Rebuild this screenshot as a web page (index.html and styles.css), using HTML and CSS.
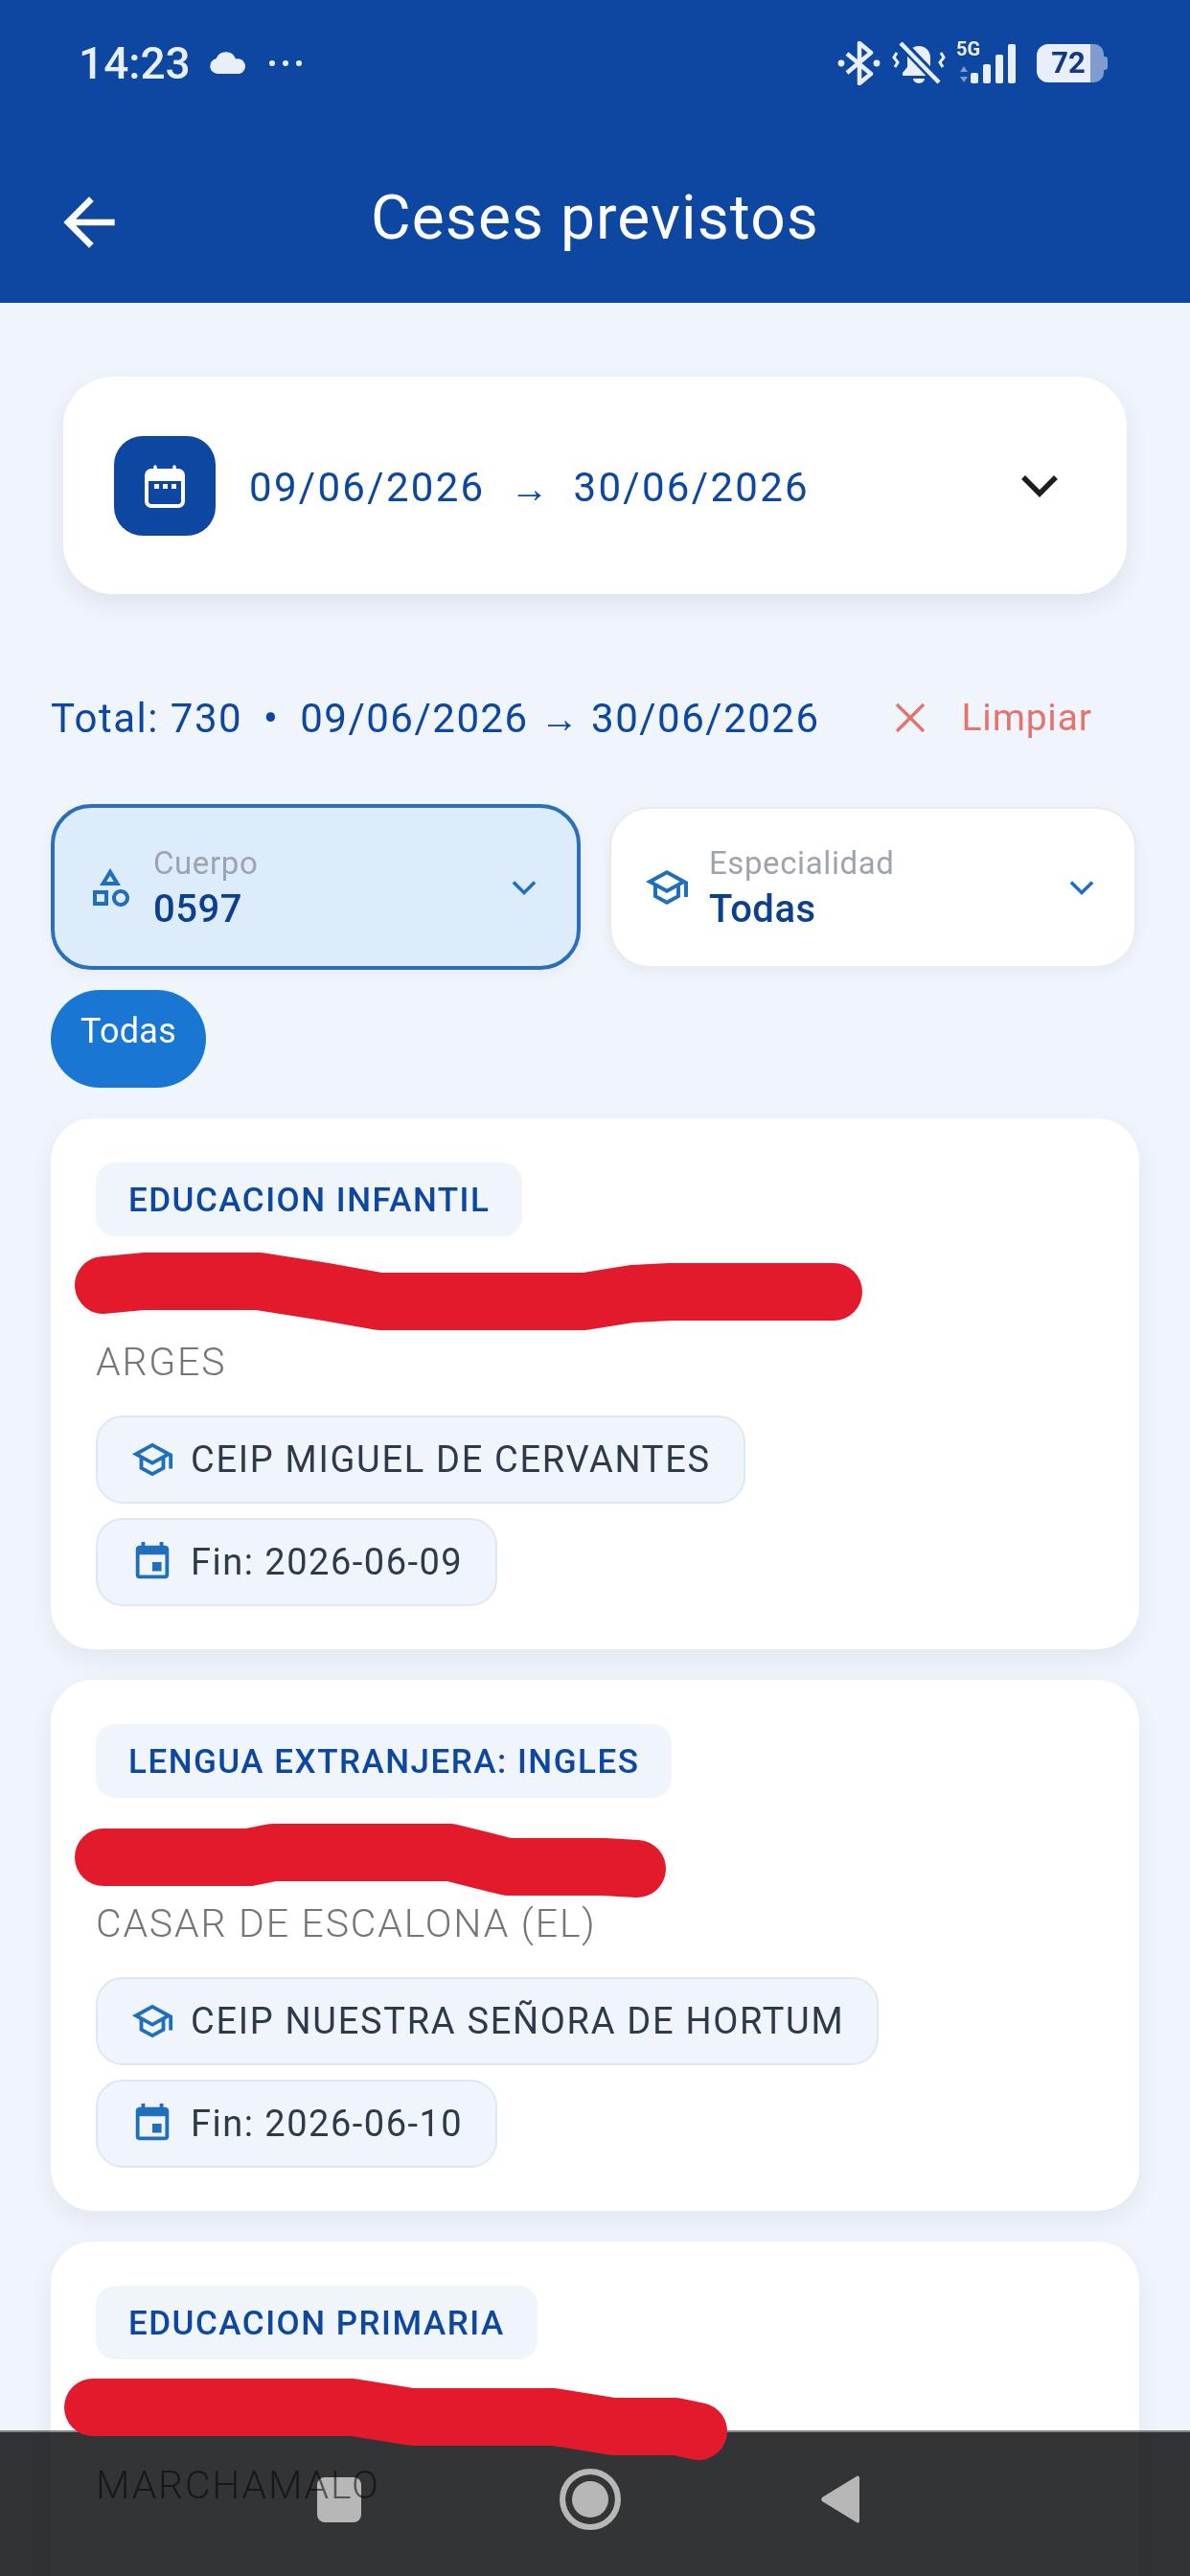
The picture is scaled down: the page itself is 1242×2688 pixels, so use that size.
FILE: index.html
```html
<!DOCTYPE html>
<html lang="es">
<head>
    <meta charset="UTF-8">
    <meta name="viewport" content="width=device-width, initial-scale=1.0">
    <title>Ceses previstos</title>
    <link rel="stylesheet" href="styles.css">
</head>
<body>

<svg class="defs" width="0" height="0">
    <symbol id="school" viewBox="0 0 24 24"><path d="M12 3L1 9l4 2.18v6L12 21l7-3.82v-6l2-1.09V17h2V9L12 3zm6.82 6L12 12.72 5.18 9 12 5.27 18.82 9zM17 15.99l-5 2.73-5-2.73v-3.72L12 15l5-2.73v3.72z"/></symbol>
    <symbol id="event" viewBox="0 0 24 24"><path d="M17 12h-5v5h5v-5zM16 1v2H8V1H6v2H5c-1.11 0-1.99.9-1.99 2L3 19c0 1.1.89 2 2 2h14c1.1 0 2-.9 2-2V5c0-1.1-.9-2-2-2h-1V1h-2zm3 18H5V8h14v11z"/></symbol>
    <symbol id="expand" viewBox="0 0 24 24"><path d="M5 8.5l7 7 7-7" fill="none" stroke="currentColor" stroke-width="2.2"/></symbol>
</svg>

<header class="appbar">
    <div class="statusbar">
        <div class="status-left">
            <span class="clock">14:23</span>
            <svg class="cloud" viewBox="0 0 40 24"><path d="M9 23a8 8 0 0 1-1.5-15.8A11 11 0 0 1 28 7.5 8 8 0 0 1 32 23z"/></svg>
            <svg class="dots" viewBox="0 0 36 8"><circle cx="4" cy="4" r="3"/><circle cx="18" cy="4" r="3"/><circle cx="32" cy="4" r="3"/></svg>
        </div>
        <div class="status-right">
            <svg class="bt" viewBox="0 0 46 46">
                <path d="M10 13l25 21-12 10V2l12 10-25 21" fill="none" stroke="#e8eefa" stroke-width="4.5" stroke-linejoin="round"/>
                <circle cx="4" cy="23" r="3.4" fill="#e8eefa"/><circle cx="41" cy="23" r="3.4" fill="#e8eefa"/>
            </svg>
            <svg class="bell" viewBox="0 0 56 46">
                <path d="M28 5c-7 0-12 5-12 12v10l-5 6v3h34v-3l-5-6V17c0-7-5-12-12-12z" fill="#e8eefa"/>
                <path d="M22 39h12a6 5 0 0 1-12 0z" fill="#e8eefa"/>
                <path d="M9 1l40 42" stroke="#0d47a1" stroke-width="10"/>
                <path d="M9 2l40 41" stroke="#e8eefa" stroke-width="4.5"/>
                <path d="M5 12l-3 5 4 5-3 5M51 12l3 5-4 5 3 5" fill="none" stroke="#e8eefa" stroke-width="3"/>
            </svg>
            <div class="signal">
                <span class="net">5G</span>
                <svg class="updown" viewBox="0 0 10 17"><path d="M5 0l4 6H1zM5 17l4-6H1z"/></svg>
                <div class="bars"><i class="b1"></i><i class="b2"></i><i class="b3"></i><i class="b4"></i></div>
            </div>
            <div class="battery"><span class="level">72</span><span class="rest"></span><span class="nub"></span></div>
        </div>
    </div>
    <div class="toolbar">
        <svg class="back" viewBox="0 0 24 24"><path d="M20 11H7.83l5.59-5.59L12 4l-8 8 8 8 1.41-1.41L7.83 13H20v-2z"/></svg>
        <h1>Ceses previstos</h1>
    </div>
</header>

<main class="content">
    <section class="range-card">
        <div class="range-icon">
            <svg viewBox="0 0 48 48">
                <path d="M14 4v7M34 4v7" stroke="#fff" stroke-width="3.5" stroke-linecap="round"/>
                <rect x="5" y="8" width="38" height="37" rx="5" fill="none" stroke="#fff" stroke-width="4"/>
                <path d="M5 13a5 5 0 0 1 5-5h28a5 5 0 0 1 5 5v6H5z" fill="#fff"/>
                <rect x="13" y="22" width="5" height="5" fill="#fff"/><rect x="22" y="22" width="5" height="5" fill="#fff"/><rect x="31" y="22" width="5" height="5" fill="#fff"/>
            </svg>
        </div>
        <span class="range-date">09/06/2026</span>
        <span class="range-arrow">→</span>
        <span class="range-date">30/06/2026</span>
        <svg class="range-chevron" viewBox="0 0 42 26"><path d="M4 4l17 17L38 4" fill="none" stroke="#1c1c1c" stroke-width="5.5"/></svg>
    </section>

    <div class="summary">
        <span class="summary-text">Total: 730 <b>•</b> 09/06/2026 <em>→</em> 30/06/2026</span>
        <button class="clear">
            <svg viewBox="0 0 34 34"><path d="M3 3l28 28M31 3L3 31" stroke="#e5736d" stroke-width="3.4"/></svg>
            Limpiar
        </button>
    </div>

    <div class="selects">
        <div class="select active">
            <svg class="select-icon" viewBox="0 0 24 24"><path d="M12 2l-5.5 9h11L12 2zm0 3.84L13.93 9h-3.87L12 5.84zM17.5 13c-2.49 0-4.5 2.01-4.5 4.5s2.01 4.5 4.5 4.5 4.5-2.01 4.5-4.5-2.01-4.5-4.5-4.5zm0 7c-1.38 0-2.5-1.12-2.5-2.5s1.12-2.5 2.5-2.5 2.5 1.12 2.5 2.5-1.12 2.5-2.5 2.5zM3 21.5h8v-8H3v8zm2-6h4v4H5v-4z"/></svg>
            <div class="select-text"><span class="select-label">Cuerpo</span><span class="select-value">0597</span></div>
            <svg class="select-chevron"><use href="#expand"/></svg>
        </div>
        <div class="select">
            <svg class="select-icon"><use href="#school"/></svg>
            <div class="select-text"><span class="select-label">Especialidad</span><span class="select-value">Todas</span></div>
            <svg class="select-chevron"><use href="#expand"/></svg>
        </div>
    </div>

    <div class="pill">Todas</div>

    <article class="card">
        <span class="tag">EDUCACION INFANTIL</span>
        <div class="name-row">
            <svg class="redact" viewBox="0 0 900 200"><path d="M68 71L110 67H230L300 78 356 88H570L620 80 660 78H830"/></svg>
        </div>
        <p class="town">ARGES</p>
        <div class="chip"><svg><use href="#school"/></svg>CEIP MIGUEL DE CERVANTES</div>
        <div class="chip end"><svg><use href="#event"/></svg>Fin: 2026-06-09</div>
    </article>

    <article class="card">
        <span class="tag">LENGUA EXTRANJERA: INGLES</span>
        <div class="name-row">
            <svg class="redact" viewBox="0 0 900 200"><path d="M68 82H220L245 77H430L490 92H590L625 94"/></svg>
        </div>
        <p class="town">CASAR DE ESCALONA (EL)</p>
        <div class="chip"><svg><use href="#school"/></svg>CEIP NUESTRA SEÑORA DE HORTUM</div>
        <div class="chip end"><svg><use href="#event"/></svg>Fin: 2026-06-10</div>
    </article>

    <article class="card last">
        <span class="tag">EDUCACION PRIMARIA</span>
        <div class="name-row">
            <svg class="redact" viewBox="0 0 900 200"><path d="M57 70H328L390 80H538L600 90H665L689 95"/></svg>
        </div>
        <p class="town">MARCHAMALO</p>
    </article>
</main>

<nav class="navbar">
    <span class="nav-square"></span>
    <span class="nav-circle"></span>
    <svg class="nav-back" viewBox="0 0 44 52"><path d="M41 3v46a2 2 0 0 1-3 1L2 28a3 3 0 0 1 0-4L38 2a2 2 0 0 1 3 1z"/></svg>
</nav>

</body>
</html>
```

FILE: styles.css
```css
* {
    box-sizing: border-box;
}
html, body {
    margin: 0;
    padding: 0;
}
body {
    position: relative;
    width: 1242px;
    height: 2688px;
    overflow: hidden;
    background-color: #f0f4fb;
    font-family: Roboto, "Liberation Sans", sans-serif;
}
.defs {
    position: absolute;
}

/* barra superior */
.appbar {
    height: 316px;
    background-color: #0d47a1;
    color: #fff;
}
.statusbar {
    height: 132px;
    padding: 0 86px 0 82px;
    display: flex;
    justify-content: space-between;
    align-items: center;
    color: #e8eefa;
}
.status-left, .status-right {
    display: flex;
    align-items: center;
}
.clock {
    font-size: 46px;
    font-weight: 500;
}
.cloud {
    width: 40px;
    height: 24px;
    margin-left: 19px;
    fill: #e8eefa;
}
.dots {
    width: 36px;
    height: 8px;
    margin-left: 22px;
    fill: #e8eefa;
}
.bt {
    width: 46px;
    height: 46px;
}
.bell {
    width: 56px;
    height: 46px;
    margin-left: 11px;
}
.signal {
    position: relative;
    width: 66px;
    height: 46px;
    margin-left: 11px;
}
.net {
    position: absolute;
    left: 0;
    top: -3px;
    font-size: 20px;
    font-weight: 700;
    line-height: 22px;
}
.updown {
    position: absolute;
    left: 3px;
    top: 26px;
    width: 10px;
    height: 17px;
    fill: #7f9bd0;
}
.bars {
    position: absolute;
    left: 15px;
    bottom: 2px;
    display: flex;
    align-items: flex-end;
    gap: 5px;
}
.bars i {
    width: 8px;
    background-color: #e8eefa;
    border-radius: 2px;
}
.bars .b1 { height: 11px; }
.bars .b2 { height: 20px; }
.bars .b3 { height: 30px; }
.bars .b4 { height: 41px; }
.battery {
    display: flex;
    align-items: center;
    margin-left: 18px;
    height: 40px;
}
.battery .level {
    width: 56px;
    height: 40px;
    padding-left: 10px;
    background-color: #e8eefa;
    border-radius: 12px 0 0 12px;
    color: #123a80;
    font-size: 31px;
    font-weight: 700;
    line-height: 40px;
    text-align: center;
}
.battery .rest {
    width: 14px;
    height: 40px;
    background-color: #7f9bd0;
    border-radius: 0 10px 10px 0;
}
.battery .nub {
    width: 4px;
    height: 14px;
    background-color: #7f9bd0;
    border-radius: 0 3px 3px 0;
}
.toolbar {
    position: relative;
    height: 184px;
    display: flex;
    justify-content: center;
    align-items: center;
}
.toolbar h1 {
    margin: 8px 0 0;
    font-size: 64px;
    font-weight: 450;
    letter-spacing: 1.1px;
    line-height: 72px;
}
.back {
    position: absolute;
    left: 53px;
    top: 60px;
    width: 80px;
    height: 80px;
    fill: #fff;
}

/* contenido */
.content {
    padding: 77px 53px 0;
}
.range-card {
    width: 1110px;
    height: 227px;
    margin-left: 13px;
    padding: 0 70px 0 53px;
    display: flex;
    align-items: center;
    background-color: #fff;
    border-radius: 52px;
    box-shadow: 0 10px 24px rgba(40, 60, 110, 0.09);
    color: #0d47a1;
}
.range-icon {
    width: 106px;
    height: 104px;
    margin-right: 35px;
    background-color: #0d47a1;
    border-radius: 30px;
    display: flex;
    justify-content: center;
    align-items: center;
}
.range-icon svg {
    width: 48px;
    height: 48px;
}
.range-date {
    padding-top: 3px;
    font-size: 42px;
    font-weight: 450;
    letter-spacing: 2.3px;
}
.range-arrow {
    width: 92px;
    text-align: center;
    font-size: 40px;
    padding-top: 8px;
}
.range-chevron {
    width: 42px;
    height: 26px;
    margin-left: auto;
}
.summary {
    height: 58px;
    margin-top: 100px;
    display: flex;
    align-items: center;
}
.summary-text {
    color: #0d47a1;
    font-size: 42px;
    font-weight: 450;
    letter-spacing: 1.5px;
    white-space: nowrap;
}
.summary-text b {
    margin: 0 10px;
    font-weight: 500;
}
.summary-text em {
    font-style: normal;
    font-size: 40px;
}
.clear {
    margin-left: 77px;
    padding: 0;
    display: flex;
    align-items: center;
    gap: 37px;
    border: none;
    background: none;
    color: #e5736d;
    font-family: inherit;
    font-size: 39px;
    letter-spacing: 0.8px;
}
.clear svg {
    width: 34px;
    height: 34px;
}
.selects {
    margin-top: 61px;
    display: grid;
    grid-template-columns: 553px 550px;
    gap: 30px;
    align-items: center;
}
.select {
    height: 168px;
    padding: 0 36px 0 34px;
    display: flex;
    align-items: center;
    background-color: #fff;
    border: 2px solid #e8ebf2;
    border-radius: 42px;
    box-shadow: 0 4px 14px rgba(40, 60, 110, 0.05);
}
.select.active {
    height: 173px;
    background-color: #dcecfb;
    border: 4px solid #2a6fb8;
}
.select-icon {
    width: 48px;
    height: 48px;
    margin-right: 20px;
    fill: #1f6fbd;
    flex-shrink: 0;
}
.select.active .select-icon {
    margin-right: 21px;
}
.select-text {
    display: flex;
    flex-direction: column;
    gap: 4px;
}
.select-label {
    color: #9ea4ad;
    font-size: 33px;
    letter-spacing: 0.6px;
    line-height: 42px;
}
.select-value {
    color: #0d3f8f;
    font-size: 40px;
    font-weight: 500;
    letter-spacing: 0.5px;
    line-height: 46px;
}
.select-chevron {
    width: 38px;
    height: 38px;
    margin-left: auto;
    color: #1f6fbd;
}
.pill {
    width: 162px;
    height: 102px;
    margin-top: 21px;
    padding-top: 23px;
    background-color: #1976d2;
    border-radius: 51px;
    color: #fff;
    font-size: 36px;
    font-weight: 450;
    letter-spacing: 0.3px;
    line-height: 40px;
    text-align: center;
}

/* tarjetas */
.card {
    position: relative;
    height: 554px;
    margin-top: 32px;
    padding: 46px 47px;
    background-color: #fff;
    border-radius: 44px;
    box-shadow: 0 10px 24px rgba(40, 60, 110, 0.07);
}
.card.last {
    height: 349px;
    border-radius: 44px 44px 0 0;
}
.tag {
    display: inline-block;
    height: 77px;
    padding: 0 34px;
    background-color: #f0f4fb;
    border-radius: 20px;
    color: #0d47a1;
    font-size: 35px;
    font-weight: 500;
    line-height: 79px;
    letter-spacing: 1.5px;
}
.name-row {
    position: relative;
    height: 106px;
}
.redact {
    position: absolute;
    left: -60px;
    top: -20px;
    width: 900px;
    height: 200px;
    z-index: 2;
    fill: none;
    stroke: #e21a2c;
    stroke-width: 60;
    stroke-linecap: round;
    stroke-linejoin: round;
}
.town {
    margin: 0 0 31px;
    color: #757575;
    font-size: 41px;
    font-weight: 350;
    letter-spacing: 1.8px;
    line-height: 50px;
}
.chip {
    width: fit-content;
    height: 92px;
    margin-bottom: 15px;
    padding: 0 34px;
    display: flex;
    align-items: center;
    gap: 17px;
    background-color: #f0f4fb;
    border: 2px solid #dde8f3;
    border-radius: 28px;
    color: #2e3a4a;
    font-size: 38px;
    letter-spacing: 1.7px;
}
.chip.end {
    letter-spacing: 1.5px;
}
.chip svg {
    width: 46px;
    height: 46px;
    fill: #1f6fbd;
}

/* barra de navegacion */
.navbar {
    position: absolute;
    left: 0;
    right: 0;
    bottom: 0;
    height: 152px;
    z-index: 1;
    background-color: #333436;
    border-top: 2px solid #8a8a8a;
    mix-blend-mode: multiply;
}
.nav-square {
    position: absolute;
    left: 331px;
    top: 47px;
    width: 46px;
    height: 47px;
    background-color: #b7b7b7;
    border-radius: 8px;
}
.nav-circle {
    position: absolute;
    left: 584px;
    top: 38px;
    width: 64px;
    height: 64px;
    background-color: #b7b7b7;
    border: 6px solid #b7b7b7;
    box-shadow: inset 0 0 0 7px #333436;
    border-radius: 50%;
}
.nav-back {
    position: absolute;
    left: 856px;
    top: 44px;
    width: 44px;
    height: 52px;
    fill: #b7b7b7;
}
```
